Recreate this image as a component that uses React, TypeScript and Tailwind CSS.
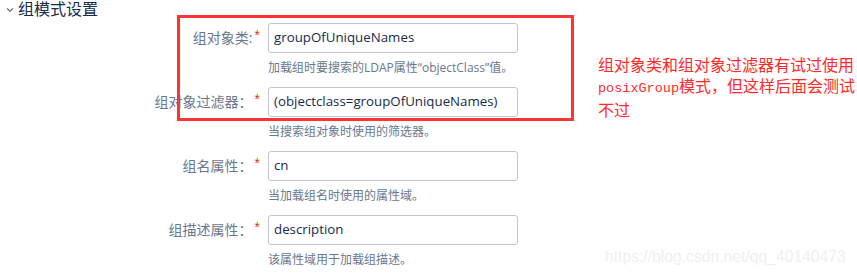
import { ChevronDown } from "lucide-react";

const cjk = "font-['Segoe_UI','Open_Sans','Noto_Sans_CJK_SC',sans-serif]";

interface Field {
  label: string;
  value: string;
  help: string;
}

const fields: Field[] = [
  { label: "组对象类:", value: "groupOfUniqueNames", help: "加载组时要搜索的LDAP属性\u201cobjectClass\u201d值。" },
  { label: "组对象过滤器：", value: "(objectclass=groupOfUniqueNames)", help: "当搜索组对象时使用的筛选器。" },
  { label: "组名属性：", value: "cn", help: "当加载组名时使用的属性域。" },
  { label: "组描述属性：", value: "description", help: "该属性域用于加载组描述。" },
];

function FormRow({ label, value, help }: Field) {
  return (
    <div className="flex">
      <div className="w-[268px] shrink-0 flex justify-end pr-[8px] h-[30px] items-center">
        <span className="text-[14px] text-[#6b778c] leading-none">{label}</span>
        <span className="text-[14px] text-[#de350b] leading-none ml-[2px] -mt-[6px] font-['Liberation_Sans']">*</span>
      </div>
      <div className="flex flex-col">
        <div className="w-[250px] h-[30px] border border-[#c1c7d0] rounded-[3px] bg-white flex items-center px-[5px] text-[13.3px] text-[#172b4d]">
          {value}
        </div>
        <div className="mt-[6px] h-[18px] leading-[18px] text-[12px] text-[#6b778c]">{help}</div>
      </div>
    </div>
  );
}

export default function App() {
  return (
    <div className={`relative w-[857px] h-[275px] bg-white overflow-hidden ${cjk}`}>
      <div className="flex items-center h-[19px] pl-[5px]">
        <ChevronDown size={10} strokeWidth={3} className="text-[#6b778c] mr-[3px]" />
        <span className="text-[16px] text-[#172b4d] leading-[19px]">组模式设置</span>
      </div>
      <div className="mt-[4px] flex flex-col gap-[10px]">
        {fields.map((f) => (
          <FormRow key={f.label} {...f} />
        ))}
      </div>

      {/* annotation overlay */}
      <div className="absolute left-[177px] top-[15px] w-[397px] h-[106px] border-[3px] border-[#ff3333]" />
      <div className="absolute left-[598px] top-[54px] w-[259px] text-[16px] leading-[21px] text-[#ff2a2a] font-['Noto_Sans_CJK_SC',sans-serif]">
        <div>组对象类和组对象过滤器有试过使用</div>
        <div>
          <span className="font-['Liberation_Mono',monospace] text-[13.5px]">posixGroup</span>模式，但这样后面会测试
        </div>
        <div>不过</div>
      </div>
      <div className="absolute left-[605px] top-[249px] text-[15.7px] text-[#f0f0f0] font-['Liberation_Sans',sans-serif] leading-none">
        https://blog.csdn.net/qq_40140473
      </div>
    </div>
  );
}
